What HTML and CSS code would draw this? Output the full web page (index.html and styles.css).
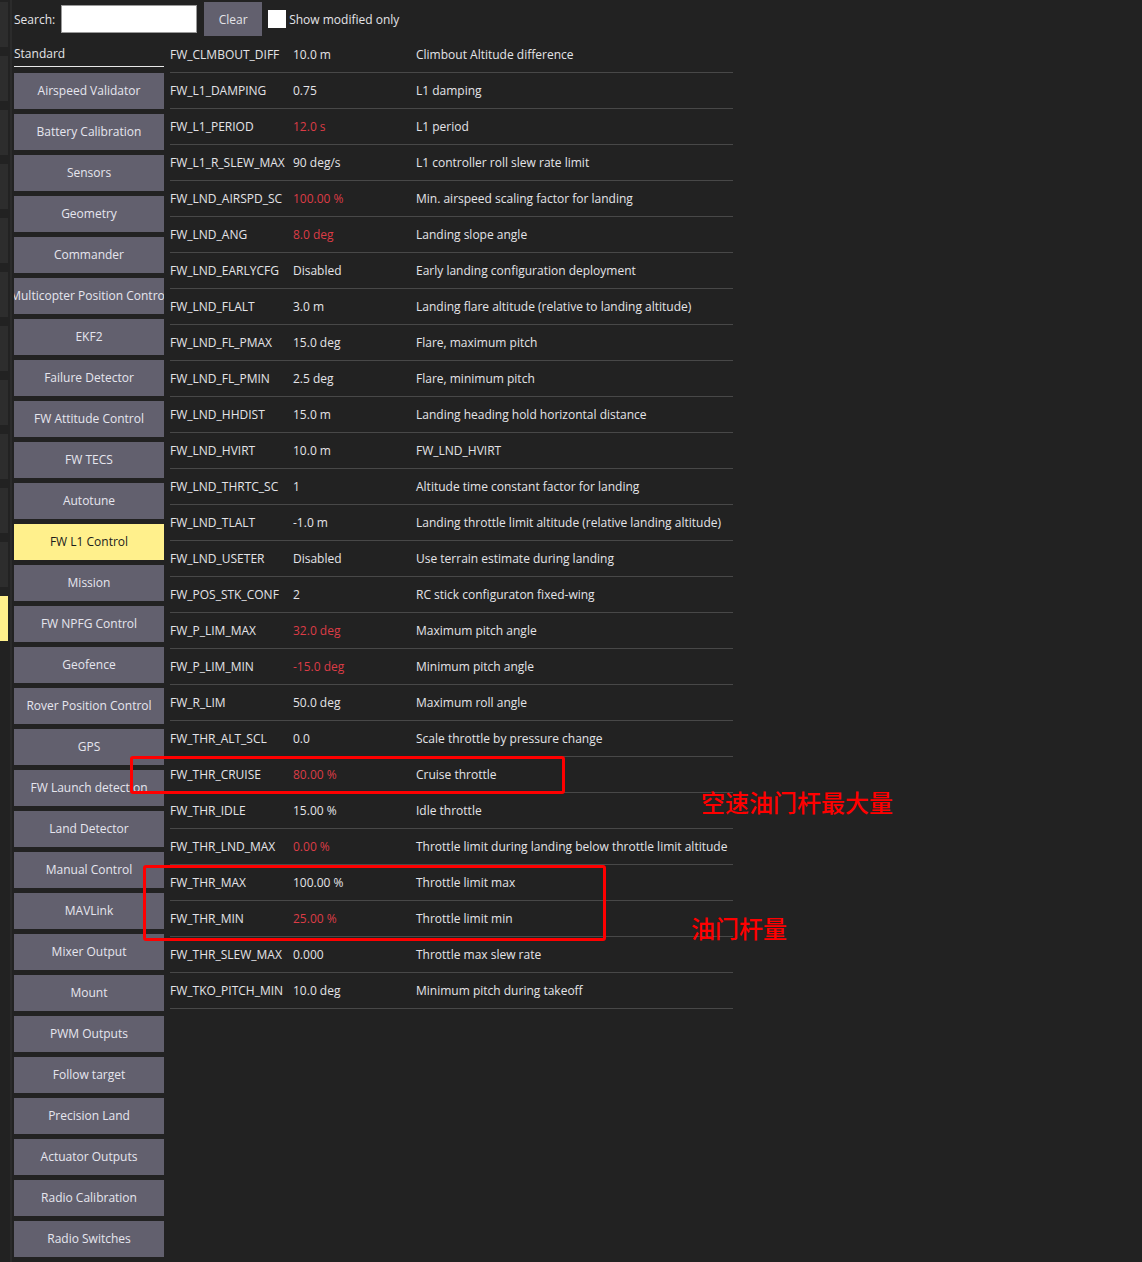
FILE: index.html
```html
<!DOCTYPE html>
<html>
<head>
<meta charset="utf-8">
<link rel="stylesheet" href="styles.css">
</head>
<body>
<div class="app">
  <div class="outer-strip">
    <div class="ob"></div><div class="ob"></div><div class="ob"></div><div class="ob"></div>
    <div class="ob"></div><div class="ob"></div><div class="ob"></div><div class="ob"></div>
    <div class="ob"></div><div class="ob"></div><div class="ob"></div><div class="ob ob-active"></div>
  </div>
  <div class="divider"></div>
  <div class="main">
    <div class="toolbar">
      <span class="lbl">Search:</span>
      <input class="search" type="text">
      <button class="btn-clear">Clear</button>
      <span class="check"></span>
      <span class="lbl">Show modified only</span>
    </div>
    <div class="content">
      <div class="groups">
        <div class="group-head">Standard</div>
        <div class="gbtn">Airspeed Validator</div>
        <div class="gbtn">Battery Calibration</div>
        <div class="gbtn">Sensors</div>
        <div class="gbtn">Geometry</div>
        <div class="gbtn">Commander</div>
        <div class="gbtn"><span>Multicopter Position Control</span></div>
        <div class="gbtn">EKF2</div>
        <div class="gbtn">Failure Detector</div>
        <div class="gbtn">FW Attitude Control</div>
        <div class="gbtn">FW TECS</div>
        <div class="gbtn">Autotune</div>
        <div class="gbtn gbtn-active">FW L1 Control</div>
        <div class="gbtn">Mission</div>
        <div class="gbtn">FW NPFG Control</div>
        <div class="gbtn">Geofence</div>
        <div class="gbtn">Rover Position Control</div>
        <div class="gbtn">GPS</div>
        <div class="gbtn">FW Launch detection</div>
        <div class="gbtn">Land Detector</div>
        <div class="gbtn">Manual Control</div>
        <div class="gbtn">MAVLink</div>
        <div class="gbtn">Mixer Output</div>
        <div class="gbtn">Mount</div>
        <div class="gbtn">PWM Outputs</div>
        <div class="gbtn">Follow target</div>
        <div class="gbtn">Precision Land</div>
        <div class="gbtn">Actuator Outputs</div>
        <div class="gbtn">Radio Calibration</div>
        <div class="gbtn">Radio Switches</div>
      </div>
      <div class="params">
        <div class="row"><span class="c-name">FW_CLMBOUT_DIFF</span><span class="c-val">10.0 m</span><span class="c-desc">Climbout Altitude difference</span></div>
        <div class="row"><span class="c-name">FW_L1_DAMPING</span><span class="c-val">0.75</span><span class="c-desc">L1 damping</span></div>
        <div class="row"><span class="c-name">FW_L1_PERIOD</span><span class="c-val mod">12.0 s</span><span class="c-desc">L1 period</span></div>
        <div class="row"><span class="c-name">FW_L1_R_SLEW_MAX</span><span class="c-val">90 deg/s</span><span class="c-desc">L1 controller roll slew rate limit</span></div>
        <div class="row"><span class="c-name">FW_LND_AIRSPD_SC</span><span class="c-val mod">100.00 %</span><span class="c-desc">Min. airspeed scaling factor for landing</span></div>
        <div class="row"><span class="c-name">FW_LND_ANG</span><span class="c-val mod">8.0 deg</span><span class="c-desc">Landing slope angle</span></div>
        <div class="row"><span class="c-name">FW_LND_EARLYCFG</span><span class="c-val">Disabled</span><span class="c-desc">Early landing configuration deployment</span></div>
        <div class="row"><span class="c-name">FW_LND_FLALT</span><span class="c-val">3.0 m</span><span class="c-desc">Landing flare altitude (relative to landing altitude)</span></div>
        <div class="row"><span class="c-name">FW_LND_FL_PMAX</span><span class="c-val">15.0 deg</span><span class="c-desc">Flare, maximum pitch</span></div>
        <div class="row"><span class="c-name">FW_LND_FL_PMIN</span><span class="c-val">2.5 deg</span><span class="c-desc">Flare, minimum pitch</span></div>
        <div class="row"><span class="c-name">FW_LND_HHDIST</span><span class="c-val">15.0 m</span><span class="c-desc">Landing heading hold horizontal distance</span></div>
        <div class="row"><span class="c-name">FW_LND_HVIRT</span><span class="c-val">10.0 m</span><span class="c-desc">FW_LND_HVIRT</span></div>
        <div class="row"><span class="c-name">FW_LND_THRTC_SC</span><span class="c-val">1</span><span class="c-desc">Altitude time constant factor for landing</span></div>
        <div class="row"><span class="c-name">FW_LND_TLALT</span><span class="c-val">-1.0 m</span><span class="c-desc">Landing throttle limit altitude (relative landing altitude)</span></div>
        <div class="row"><span class="c-name">FW_LND_USETER</span><span class="c-val">Disabled</span><span class="c-desc">Use terrain estimate during landing</span></div>
        <div class="row"><span class="c-name">FW_POS_STK_CONF</span><span class="c-val">2</span><span class="c-desc">RC stick configuraton fixed-wing</span></div>
        <div class="row"><span class="c-name">FW_P_LIM_MAX</span><span class="c-val mod">32.0 deg</span><span class="c-desc">Maximum pitch angle</span></div>
        <div class="row"><span class="c-name">FW_P_LIM_MIN</span><span class="c-val mod">-15.0 deg</span><span class="c-desc">Minimum pitch angle</span></div>
        <div class="row"><span class="c-name">FW_R_LIM</span><span class="c-val">50.0 deg</span><span class="c-desc">Maximum roll angle</span></div>
        <div class="row"><span class="c-name">FW_THR_ALT_SCL</span><span class="c-val">0.0</span><span class="c-desc">Scale throttle by pressure change</span></div>
        <div class="row"><span class="c-name">FW_THR_CRUISE</span><span class="c-val mod">80.00 %</span><span class="c-desc">Cruise throttle</span></div>
        <div class="row"><span class="c-name">FW_THR_IDLE</span><span class="c-val">15.00 %</span><span class="c-desc">Idle throttle</span></div>
        <div class="row"><span class="c-name">FW_THR_LND_MAX</span><span class="c-val mod">0.00 %</span><span class="c-desc">Throttle limit during landing below throttle limit altitude</span></div>
        <div class="row"><span class="c-name">FW_THR_MAX</span><span class="c-val">100.00 %</span><span class="c-desc">Throttle limit max</span></div>
        <div class="row"><span class="c-name">FW_THR_MIN</span><span class="c-val mod">25.00 %</span><span class="c-desc">Throttle limit min</span></div>
        <div class="row"><span class="c-name">FW_THR_SLEW_MAX</span><span class="c-val">0.000</span><span class="c-desc">Throttle max slew rate</span></div>
        <div class="row"><span class="c-name">FW_TKO_PITCH_MIN</span><span class="c-val">10.0 deg</span><span class="c-desc">Minimum pitch during takeoff</span></div>
      </div>
    </div>
  </div>

  <div class="mark mark-1"></div>
  <div class="mark mark-2"></div>
  <div class="note note-1">空速油门杆最大量</div>
  <div class="note note-2">油门杆量</div>
</div>
</body>
</html>
```

FILE: styles.css
```css
* { box-sizing: border-box; }
html, body {
  margin: 0;
  padding: 0;
  background: #222222;
}
body {
  font-family: "Open Sans", "Noto Sans", sans-serif;
  font-size: 12px;
  color: #e4e4e8;
}
.app {
  position: relative;
  display: flex;
  align-items: flex-start;
  width: 1142px;
  min-height: 1262px;
}
.outer-strip {
  width: 8px;
  padding-top: 2px;
  display: flex;
  flex-direction: column;
  gap: 9px;
}
.ob {
  height: 45px;
  background: #2d2d2d;
}
.ob-active { background: #fff08c; }
.divider {
  width: 2px;
  margin-left: 2px;
  align-self: stretch;
  min-height: 1262px;
  background: #2b2b2b;
}
.main {
  margin-left: 2px;
  display: flex;
  flex-direction: column;
}
.toolbar {
  height: 36px;
  padding-top: 2px;
  display: flex;
  align-items: center;
}
.lbl { white-space: nowrap; }
.search {
  margin-left: 6px;
  width: 136px;
  height: 28px;
  border: 1px solid #9a9a9a;
  background: #fff;
  padding: 0;
}
.btn-clear {
  margin-left: 7px;
  width: 58px;
  height: 34px;
  border: 0;
  background: #62606e;
  color: #e4e4e8;
  font-family: inherit;
  font-size: 12px;
  padding: 0;
}
.check {
  margin-left: 6px;
  width: 18px;
  height: 18px;
  background: #ffffff;
  margin-right: 3px;
}
.content {
  display: flex;
  align-items: flex-start;
}
.groups {
  width: 150px;
  flex-shrink: 0;
  display: flex;
  flex-direction: column;
  gap: 5px;
}
.group-head {
  height: 31px;
  padding-top: 9px;
  border-bottom: 1px solid #e8e8e8;
  margin-bottom: 1px;
}
.gbtn {
  height: 36px;
  background: #62606e;
  display: flex;
  align-items: center;
  justify-content: center;
  white-space: nowrap;
  overflow: hidden;
  color: #e6e6ee;
  padding-bottom: 1px;
}
.gbtn-active {
  background: #fff08c;
  color: #1c1c1c;
}
.params {
  margin-left: 6px;
  margin-top: 1px;
  width: 563px;
}
.row {
  height: 36px;
  display: flex;
  align-items: center;
  border-bottom: 1px solid #484848;
  white-space: nowrap;
}
.c-name { width: 123px; flex-shrink: 0; }
.c-val { width: 123px; flex-shrink: 0; }
.c-desc { flex: 1; }
.mod { color: #dc3c46; }

.mark {
  position: absolute;
  border: 3px solid #ff0000;
  border-radius: 3px;
}
.mark-1 { left: 130px; top: 756px; width: 435px; height: 38px; }
.mark-2 { left: 143px; top: 865px; width: 463px; height: 76px; }
.note {
  position: absolute;
  color: #ff0000;
  font-family: "Noto Sans CJK SC", sans-serif;
  font-size: 24px;
  font-weight: 500;
  line-height: 1;
  white-space: nowrap;
}
.note-1 { left: 701px; top: 790px; }
.note-2 { left: 691px; top: 916px; }
```
